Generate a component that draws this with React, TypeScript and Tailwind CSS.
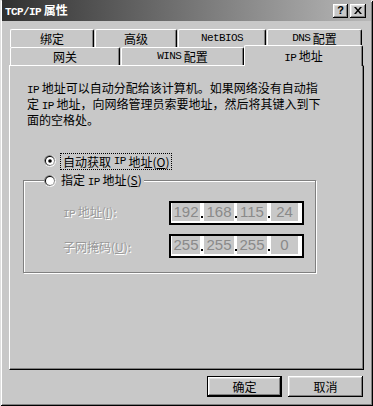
import React from 'react'

const cjk = "font-['Noto_Sans_CJK_SC',sans-serif]"
const raised =
  'shadow-[inset_-1px_-1px_#000,inset_1px_1px_#fff,inset_-2px_-2px_#808080,inset_2px_2px_#dfdfdf]'

function M({ children, className = '' }: { children: React.ReactNode; className?: string }) {
  return (
    <span className={"font-['Liberation_Mono',monospace] text-[11px] tracking-[-0.6px] " + className}>
      {children}
    </span>
  )
}

function Radio({ checked }: { checked?: boolean }) {
  return (
    <svg width="12" height="12" viewBox="0 0 12 12" className="shrink-0">
      <circle cx="6" cy="6" r="6" fill="#fff" />
      <circle cx="5.6" cy="5.6" r="5.6" fill="#808080" />
      <circle cx="6" cy="6" r="5" fill="#dfdfdf" />
      <circle cx="5.7" cy="5.7" r="4.7" fill="#000" />
      <circle cx="6" cy="6" r="4" fill="#fff" />
      {checked && <circle cx="6" cy="6" r="1.8" fill="#000" />}
    </svg>
  )
}

function Tab({ w, label, extra = '' }: { w: string; label: React.ReactNode; extra?: string }) {
  return (
    <div
      className={
        'h-[18px] flex items-center justify-center rounded-t-[2px] border-t border-l border-white border-r border-r-black shadow-[inset_-1px_0_#808080] text-[12px] leading-[13px] ' +
        w +
        ' ' +
        extra
      }
    >
      {label}
    </div>
  )
}

function IpField({ parts }: { parts: string[] }) {
  const widths = ['w-[28px]', 'w-[30px]', 'w-[30px]', 'w-[27px]']
  const gaps = ['w-[4px]', 'w-[3px]', 'w-[4px]']
  return (
    <div className="w-[135px] h-[24px] border-2 border-black bg-white flex items-start pl-px">
      {parts.map((p, i) => (
        <React.Fragment key={i}>
          <div
            className={
              widths[i] +
              " h-[18px] bg-[#c8c8c8] flex items-center justify-center font-['Liberation_Sans',sans-serif] text-[15px] leading-[18px] text-[#8a8a8a]"
            }
          >
            {p}
          </div>
          {i < 3 && (
            <div className={gaps[i] + ' h-[18px] relative'}>
              <span className="absolute left-[1px] top-[13px] w-[2px] h-[2px] bg-black" />
            </div>
          )}
        </React.Fragment>
      ))}
    </div>
  )
}

export default function App() {
  return (
    <div
      className={
        'w-[373px] h-[406px] bg-[#c8c8c8] text-black flex flex-col overflow-hidden shadow-[inset_1px_1px_#dfdfdf,inset_-1px_-1px_#000,inset_2px_2px_#fff,inset_-2px_-2px_#808080] ' +
        cjk
      }
    >
      {/* title bar */}
      <div className="mx-[2px] h-[21px] flex items-center bg-[linear-gradient(to_right,#303030,#b8b8b8)] pl-[3px] pr-[5px]">
        <div className="text-white font-bold text-[12px] leading-[14px] flex-1">
          <M className="font-bold">TCP/IP</M>&nbsp;属性
        </div>
        <div className={'w-[15px] h-[14px] bg-[#c8c8c8] flex items-center justify-center ' + raised}>
          <span className="font-['Liberation_Sans',sans-serif] font-bold text-[11px] leading-[11px] text-black -mt-px">?</span>
        </div>
        <div className={'ml-[2px] w-[16px] h-[14px] bg-[#c8c8c8] flex items-center justify-center ' + raised}>
          <svg width="8" height="7" viewBox="0 0 8 7">
            <path d="M0 0h2l2 2.5L6 0h2L5 3.5 8 7H6L4 4.5 2 7H0l3-3.5z" fill="#000" />
          </svg>
        </div>
      </div>

      {/* tabs */}
      <div className="ml-[10px] mt-[8px] flex gap-px">
        <Tab w="w-[84px]" label="绑定" />
        <Tab w="w-[82px]" label="高级" />
        <Tab w="w-[88px]" label={<M>NetBIOS</M>} />
        <Tab w="w-[95px]" label={<><M>DNS</M>&nbsp;配置</>} />
      </div>
      <div className="ml-[10px] h-[18px] flex items-end gap-px relative z-10">
        <Tab w="w-[110px]" label="网关" />
        <Tab w="w-[123px]" label={<><M>WINS</M>&nbsp;配置</>} />
        <div className="w-[119px] h-[21px] relative top-px bg-[#c8c8c8] flex items-start pt-[3px] justify-center rounded-t-[2px] border-t border-l border-white border-r border-r-black shadow-[inset_-1px_0_#808080] text-[12px] leading-[13px] -ml-px">
          <span>
            <M>IP</M>&nbsp;地址
          </span>
        </div>
      </div>

      {/* panel */}
      <div className="ml-[9px] w-[355px] h-[305px] border-t border-l border-white border-r border-b border-r-black border-b-black shadow-[inset_-1px_-1px_#808080] flex flex-col text-[12px] leading-[13px]">
        <div className="pl-[17px] pt-[15px]">
          <div>
            <M>IP</M>&nbsp;地址可以自动分配给该计算机。如果网络没有自动指
          </div>
          <div>
            定&nbsp;<M>IP</M>&nbsp;地址，向网络管理员索要地址，然后将其键入到下
          </div>
          <div>面的空格处。</div>
        </div>

        <div className="ml-[34px] mt-[26px] h-[18px] flex items-center">
          <Radio checked />
          <span className="ml-[4px] px-[2px] h-[17px] flex items-center border border-dotted border-black">
            自动获取&nbsp;<M>IP</M>&nbsp;地址(<span className="underline">O</span>)
          </span>
        </div>

        {/* group box */}
        <div className="ml-[13px] mt-[10px] w-[293px] h-[93px] border border-[#808080] shadow-[1px_1px_#fff,inset_1px_1px_#fff] flex flex-col">
          <div className="-mt-[9px] ml-[20px] w-fit h-[18px] pr-[2px] bg-[#c8c8c8] flex items-center">
            <Radio />
            <span className="ml-[5px]">
              指定&nbsp;<M>IP</M>&nbsp;地址(<span className="underline">S</span>)
            </span>
          </div>
          <div className="mt-[11px] flex items-center">
            <div className="ml-[39px] w-[106px] text-[#9a9a9a] [text-shadow:1px_1px_#fff]">
              <M>IP</M>&nbsp;地址(<span className="underline">I</span>):
            </div>
            <IpField parts={['192', '168', '115', '24']} />
          </div>
          <div className="mt-[9px] flex items-center">
            <div className="ml-[39px] w-[106px] text-[#9a9a9a] [text-shadow:1px_1px_#fff]">
              子网掩码(<span className="underline">U</span>):
            </div>
            <IpField parts={['255', '255', '255', '0']} />
          </div>
        </div>
      </div>

      {/* buttons */}
      <div className="mt-[6px] flex justify-end gap-[6px] pr-[10px] text-[12px]">
        <div className="w-[75px] h-[21px] border border-black flex">
          <div className={'flex-1 flex items-center justify-center ' + raised}>确定</div>
        </div>
        <div className={'w-[75px] h-[21px] flex items-center justify-center ' + raised}>取消</div>
      </div>
    </div>
  )
}
